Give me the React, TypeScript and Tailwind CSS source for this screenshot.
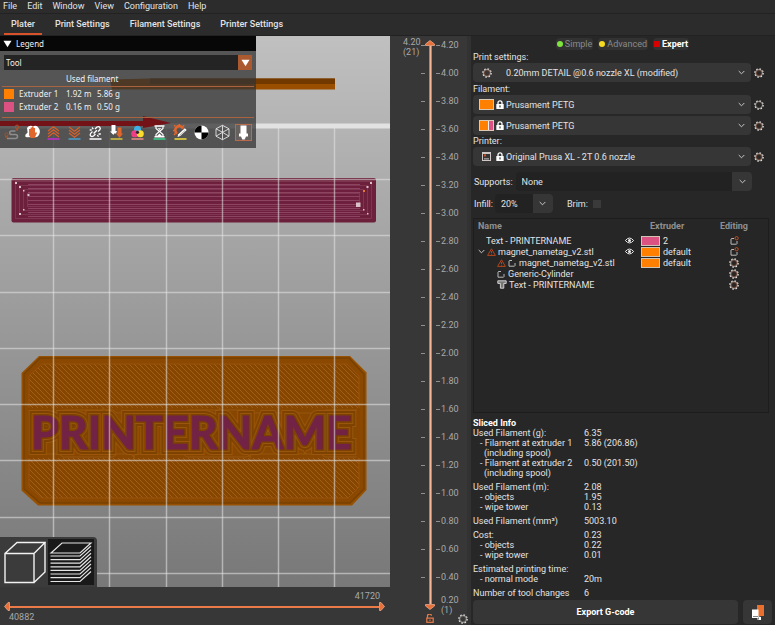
import type { ReactNode } from "react";
import clsx from "clsx";

const MENU = ["File", "Edit", "Window", "View", "Configuration", "Help"];
const TABS = ["Plater", "Print Settings", "Filament Settings", "Printer Settings"];

const TICKS = Array.from({ length: 20 }, (_, i) => (4.2 - i * 0.2).toFixed(2));

const GRID_X = [53, 109, 166, 222, 278, 334];
const GRID_Y = [179, 235, 292, 348, 404, 460, 517, 573];

const MODES = [
  { name: "Simple", dot: "bg-[#7fe53c] rounded-full", active: false },
  { name: "Advanced", dot: "bg-[#f5dc1e] rounded-full", active: false },
  { name: "Expert", dot: "bg-[#d90000]", active: true },
];

const SLICED = [
  [
    ["Used Filament (g):", "6.35", 0],
    ["- Filament at extruder 1", "5.86 (206.86)", 1],
    ["(including spool)", "", 2],
    ["- Filament at extruder 2", "0.50 (201.50)", 1],
    ["(including spool)", "", 2],
  ],
  [
    ["Used Filament (m):", "2.08", 0],
    ["- objects", "1.95", 1],
    ["- wipe tower", "0.13", 1],
  ],
  [["Used Filament (mm³)", "5003.10", 0]],
  [
    ["Cost:", "0.23", 0],
    ["- objects", "0.22", 1],
    ["- wipe tower", "0.01", 1],
  ],
  [
    ["Estimated printing time:", "", 0],
    ["- normal mode", "20m", 1],
  ],
  [["Number of tool changes", "6", 0]],
] as [string, string, number][][];

const INDENTS = ["", "pl-[7px]", "pl-[11px]"];

const Cog = ({ core = "#5a3526" }: { core?: string }) => (
  <svg width="10" height="10" viewBox="0 0 10 10" className="shrink-0">
    <circle cx="5" cy="5" r="2.6" fill="none" stroke={core} strokeWidth="1.2" />
    <circle cx="5" cy="5" r="3.5" fill="none" stroke="#b9b0ab" strokeWidth="0.8" />
    <circle
      cx="5"
      cy="5"
      r="4.2"
      fill="none"
      stroke="#e8e4e1"
      strokeWidth="1.2"
      strokeDasharray="1.5 1.8"
    />
  </svg>
);

const Chevron = () => (
  <svg width="7" height="5" viewBox="0 0 7 5" className="shrink-0">
    <path d="M.7 1 3.5 3.8 6.3 1" fill="none" stroke="#c8c8c8" />
  </svg>
);

const Lock = () => (
  <svg width="8" height="9" viewBox="0 0 8 9">
    <path d="M2 4.5V2.8a2 2 0 0 1 4 0v1.7" fill="none" stroke="#fff" strokeWidth="1.3" />
    <rect x=".3" y="4" width="7.4" height="5" rx=".6" fill="#fff" />
    <rect x="3.4" y="5.4" width="1.2" height="2" fill="#333" />
  </svg>
);

const Eye = () => (
  <svg width="9" height="7" viewBox="0 0 9 7">
    <path d="M.4 3.5Q4.5-1.4 8.6 3.5 4.5 8.4.4 3.5Z" fill="#222" stroke="#eee" strokeWidth="1" />
    <circle cx="4.5" cy="3.5" r="1.5" fill="#eee" />
  </svg>
);

const Warning = () => (
  <svg width="9" height="8" viewBox="0 0 9 8" className="shrink-0">
    <path d="M4.5.8 8.4 7.4H.6Z" fill="none" stroke="#b5451b" />
    <path d="M4.5 3v2.2M4.5 5.9v.8" stroke="#b5451b" strokeWidth=".9" />
  </svg>
);

const Part = ({ dot = false }: { dot?: boolean }) => (
  <svg width="9" height="9" viewBox="0 0 9 9" className="shrink-0">
    <path d="M4 2.5H1.500L1 3V8.200h5.5L7 7.700V5" fill="none" stroke="#c9c9c9" strokeWidth=".9" />
    {dot && <circle cx="6.6" cy="2.2" r="1.6" fill="none" stroke="#c4501f" />}
  </svg>
);

const TextPart = () => (
  <svg width="10" height="9" viewBox="0 0 10 9" className="shrink-0">
    <path d="M.8.8h8.4v2.6H6.8v4.8H3.4V3.4H.8Z" fill="#777" stroke="#ddd" strokeWidth=".9" />
  </svg>
);

const PrinterIcon = () => (
  <svg width="9" height="9" viewBox="0 0 9 9">
    <rect x=".5" y=".5" width="8" height="8" fill="none" stroke="#cfc8c4" />
    <path d="M.5 1.5h8M2 6.9h5" stroke="#cfc8c4" />
    <rect x="2" y="2.4" width="2" height="2" fill="#d4551f" />
  </svg>
);

const Swatch = ({ split = false }: { split?: boolean }) => (
  <span className="flex h-[11px] w-[15px] border border-[#d9c9b5] bg-[#ff8000]">
    {split && <span className="ml-auto w-[5px] border-l border-[#eee] bg-[#db5182]" />}
  </span>
);

const LegendIcon = ({ bar, children }: { bar?: string; children: ReactNode }) => (
  <svg width="17" height="17" viewBox="0 0 17 17">
    {children}
    {bar && <path d="M2.5 15h12" stroke={bar} strokeWidth="1.5" />}
  </svg>
);

const LegendIcons = () => (
  <div className="relative flex justify-between pr-1 pl-[3px]">
    <LegendIcon>
      <path
        d="M4 14.500h8.500a2 2 0 0 0 0-4H8.500a1.800 1.800 0 0 1 0-3.600h4"
        fill="none"
        stroke="#8d8d8d"
        strokeWidth="1.5"
      />
      <circle cx="3.500" cy="10.500" r="1.600" fill="none" stroke="#9b5434" />
      <circle cx="14" cy="2.800" r="1.700" fill="none" stroke="#b0532a" />
      <path d="m2.400 12 1.100 2.200L4.600 12M12.900 4.500l1.100 2.200 1.100-2.200" stroke="#b0532a" fill="none" />
    </LegendIcon>
    <LegendIcon>
      <path
        d="M3 4Q5 1 9 2.2 13 .8 14.6 4 17 7 15 11q-2 3-4.5 2L3 13.2Q.4 13 1.6 10.4L3.6 8.5Z"
        fill="#fff"
      />
      <path d="M5 8V5h1.600V3.400H8v-.8h1.600v1.400H11V9l1-1 1 .9-2.400 5.100H7L5 11.500Z" fill="#e0662d" />
    </LegendIcon>
    <LegendIcon bar="#c42bd0">
      <path
        d="m3 7 5.5-4.2L14 7M3 10l5.5-4.2L14 10M3 13l5.5-4.2L14 13"
        stroke="#d8602b"
        strokeWidth="1.2"
        fill="none"
      />
    </LegendIcon>
    <LegendIcon bar="#4d9fce">
      <path
        d="m3 3 5.5 4.2L14 3M3 6l5.5 4.2L14 6M3 9l5.5 4.2L14 9"
        stroke="#d8602b"
        strokeWidth="1.2"
        fill="none"
      />
    </LegendIcon>
    <LegendIcon bar="#fff">
      <path
        d="m8 5 2-2q1.700-1 2.800.2t0 2.600L11 7.600M8.500 10l-2 2q-1.600 1-2.800 0t0-2.600L5.500 7.500M6.600 9.500l3.300-3.300M5 3.500l1.300 1.700M2.700 6h2M11.500 10h2.300M10.300 11l1.200 1.700"
        stroke="#fff"
        strokeWidth="1.3"
        fill="none"
      />
    </LegendIcon>
    <LegendIcon bar="#d6c33f">
      <path d="M3.500 1h4v6H9l-1 2.500H6l-.5 1.500L2 7.500h1.500Z" fill="#fff" />
      <path d="M9.500 3.500h4v6H15L11.500 14 8 9.500h1.500Z" fill="#e0662d" />
    </LegendIcon>
    <LegendIcon bar="#ef8d86">
      <circle cx="8.500" cy="5.300" r="3.500" fill="#3fb1e6" />
      <circle cx="5.700" cy="9.800" r="3.500" fill="#ef3e88" />
      <circle cx="11.300" cy="9.800" r="3.500" fill="#fbdc2c" />
      <circle cx="8.500" cy="8.300" r="1.600" fill="#2b2430" />
    </LegendIcon>
    <LegendIcon bar="#39d48c">
      <path d="M3.500 2h10M3.500 12.800h10" stroke="#fff" strokeWidth="1.500" />
      <path
        d="M5 2.500v2L8.500 7.400 12 4.500v-2M5 12.500v-2l3.500-3.100 3.500 3.100v2"
        stroke="#fff"
        strokeWidth="1.200"
        fill="none"
      />
      <path d="M6.500 4.300h4l-2 1.700ZM6 12l2.500-2.500L11 12Z" fill="#fff" />
    </LegendIcon>
    <LegendIcon bar="#f2dd3a">
      <path
        d="M11 4.800A4 4 0 1 0 5 9.500"
        fill="none"
        stroke="#e0662d"
        strokeWidth="2.600"
      />
      <path
        d="M3.500 2.500 2.200 1.200M7.300 1V0M2.700 6.500H1M11 2.500l1.200-1.300M3.500 9.500 2 11"
        stroke="#e0662d"
        strokeWidth="1.600"
      />
      <path d="m5.500 13 .8-2.800 6.500-6 1.900 1.900-6.500 6Z" fill="#fff" />
      <path d="m7.500 11.500 5.500-5" stroke="#8d8d8d" strokeWidth=".7" />
    </LegendIcon>
    <LegendIcon>
      <circle cx="8.500" cy="8.500" r="7" fill="#fff" />
      <path d="M8.500 1.500a7 7 0 0 0-7 7h7ZM8.500 8.500h7a7 7 0 0 1-7 7Z" fill="#000" />
    </LegendIcon>
    <LegendIcon>
      <path
        d="M8.500 1.300 15 4.800v7.400l-6.500 3.500L2 12.200V4.800ZM2 4.800l6.500 3.500L15 4.800M8.500 8.300v7.400M2 12.200l6.500-3.900L15 12.200M8.500 1.300v7"
        fill="none"
        stroke="#e4e4e4"
        strokeWidth=".9"
      />
    </LegendIcon>
    <LegendIcon>
      <rect x=".5" y=".5" width="16" height="16" fill="#66605e" stroke="#b86a4c" />
      <path d="M5.500 1.500h6v8h1.500v3h-2l-1.300 3H7.300l-1.300-3H4v-3h1.500Z" fill="#fff" />
    </LegendIcon>
  </div>
);

const Scene = () => (
  <svg
    className="block h-full w-full"
    viewBox="0 36 390 551"
    preserveAspectRatio="xMinYMin slice"
  >
    <defs>
      <linearGradient id="sky" x1="0" y1="0" x2="0" y2="1">
        <stop offset="0" stopColor="#c0c0c0" />
        <stop offset=".35" stopColor="#a6a6a6" />
        <stop offset="1" stopColor="#787878" />
      </linearGradient>
      <pattern id="infill" width="5" height="5" patternUnits="userSpaceOnUse">
        <rect width="5" height="5" fill="#874600" />
        <path d="M-1-1 6 6M-1 4 1 6M4-1 6 1" stroke="#9f5f1a" strokeWidth="1" />
      </pattern>
      <pattern id="lines" width="4" height="4" y="179" patternUnits="userSpaceOnUse">
        <rect width="4" height="4" fill="#6e1f3d" />
        <rect width="4" height="1" y="1" fill="#8c4460" />
      </pattern>
    </defs>
    <rect y="36" width="390" height="551" fill="url(#sky)" />
    <path d="M110 79.500 150 78.500H335V89.500H112Z" fill="#9a4e00" />
    <path d="M150 78.500H335V84H150Z" fill="#713900" />

    <rect x="11.500" y="178" width="364.500" height="44.500" rx="2" fill="#6c203b" />
    <rect x="28" y="183" width="332" height="36" fill="url(#lines)" />
    {[0, 4, 8, 12].map((d) => (
      <rect
        key={d}
        x={15.5 + d}
        y={181.5 + d}
        width={356 - d * 2}
        height={37 - d * 2}
        fill="none"
        stroke="#874059"
        strokeWidth=".7"
      />
    ))}
    <g fill="#dcc0c8">
      <path d="M15 182h2v2h-2zM19 186h2v2h-2zM23 190h1.500v1.500H23zM27.500 194h2v2h-2zM19 213h2v2h-2zM23 209h1.500v1.500H23z" />
      <path d="M370 182h2v2h-2zM366.500 186h2v2h-2zM367 213h1.500v1.500H367zM363 209h1.500v1.500H363zM356 202.500h4.500v4.500H356z" />
    </g>
    <path d="M363 190h2v2h-2z" fill="#e07830" />

    <path d="M39 356H350L366.500 372.500V490L352 505.500H38L21.500 490.500V373Z" fill="#965000" />
    <path
      d="M40 358H349L364 374V489L350 503H40L24 489V374Z"
      fill="#8a4800"
      stroke="#774000"
      strokeWidth="1.500"
    />
    <path d="M42 364H347L359 376V487L348 498H42L29 487V376Z" fill="url(#infill)" stroke="#95530f" />
    <rect x="28" y="408" width="332" height="50" fill="#874700" />
    <path
      d="M31 413h28l4-3h50l4 3h66l4-3h60l4 3h70l4-3h32M31 454h28l4 3h50l4-3h66l4 3h60l4-3h70l4 3h32"
      fill="none"
      stroke="#96560f"
    />
    <g fontFamily="Lato, sans-serif" fontWeight="700" fontSize="45">
      <text x="31" y="449" fill="none" stroke="#9a560c" strokeWidth="12">
        PRINTERNAME
      </text>
      <text x="31" y="449" fill="none" stroke="#7e4200" strokeWidth="10">
        PRINTERNAME
      </text>
      <text x="31" y="449" fill="none" stroke="#9a560c" strokeWidth="6">
        PRINTERNAME
      </text>
      <text x="31" y="449" fill="none" stroke="#7e4200" strokeWidth="4">
        PRINTERNAME
      </text>
      <text x="31" y="449" fill="#722244" stroke="#722244" strokeWidth=".8">
        PRINTERNAME
      </text>
    </g>

    <g stroke="#e6e6e6" strokeOpacity=".55" strokeWidth="1.500">
      {GRID_X.map((x) => (
        <path key={x} d={`M${x + 0.5} 126V587`} />
      ))}
      {GRID_Y.map((y) => (
        <path key={y} d={`M0 ${y + 0.5}H390`} />
      ))}
    </g>
    <path d="M0 126H390" stroke="#e2e2e2" strokeWidth="5" />
  </svg>
);

const Legend = () => (
  <section className="absolute top-0 left-0 h-28 w-64 bg-[#333]/75 font-['Noto_Sans',sans-serif] text-[8px] leading-[13px] text-[#f0f0f0]">
    <h2 className="flex h-[15px] items-center gap-1 bg-[#070707] pl-[3px]">
      <svg width="9" height="8" viewBox="0 0 9 8">
        <path d="M.5.8h8l-4 6.400Z" fill="#fff" />
      </svg>
      Legend
    </h2>
    <svg className="absolute top-[80px] left-0" width="172" height="14" viewBox="0 0 172 14">
      <path d="M0 5H143V0L171 7 143 12V10H0Z" fill="#741317" />
    </svg>
    <div className="relative mx-1 mt-1 flex">
      <select
        aria-label="Legend view"
        className="h-[15px] w-full appearance-none bg-[#242424] px-[2px]"
      >
        <option>Tool</option>
      </select>
      <span className="pointer-events-none absolute top-0 right-0 flex h-[15px] w-[14px] items-center justify-center bg-[#ab5a2f]">
        <svg width="9" height="8" viewBox="0 0 9 8">
          <path d="M.5.8h8l-4 6.400Z" fill="#fff" />
        </svg>
      </span>
    </div>
    <table className="relative mx-[2px] mt-[2px] w-[252px] border-separate border-spacing-0 text-left">
      <thead>
        <tr>
          <th className="w-16 border-b border-[#a9633f]" />
          <th className="border-b border-[#a9633f] pb-px font-normal" colSpan={2}>
            Used filament
          </th>
        </tr>
      </thead>
      <tbody>
        {[
          ["Extruder 1", "1.92 m", "5.86 g", "bg-[#ff8000]"],
          ["Extruder 2", "0.16 m", "0.50 g", "bg-[#db5182]"],
        ].map(([name, length, weight, color]) => (
          <tr key={name}>
            <td className="flex w-16 items-center gap-[5px] pl-[2px]">
              <span className={clsx("h-[10px] w-[10px]", color)} />
              {name}
            </td>
            <td className="w-[31px]">{length}</td>
            <td>{weight}</td>
          </tr>
        ))}
      </tbody>
    </table>
    <div className="relative mx-[2px] mt-1 mb-[6px] h-px bg-[#a9633f]" />
    <LegendIcons />
  </section>
);

const ViewButtons = () => (
  <div className="absolute bottom-0 left-0 flex h-[50px] w-[97px] items-center gap-[2px] rounded-tr bg-[#3b3b3b]">
    <button aria-label="3D editor view" className="h-[46px] w-[46px]">
      <svg viewBox="0 0 46 46" fill="none" stroke="#f2f2f2" strokeWidth="1.400">
        <path d="M5 14.500H34V43.500H5ZM5 14.500 17 3.500H45L34 14.500M45 3.500V33L34 43.500" />
      </svg>
    </button>
    <button aria-label="Preview" className="h-[46px] w-[46px] bg-[#191919]">
      <svg viewBox="0 0 46 46" fill="none" stroke="#e4e4e4" strokeWidth="1.200">
        <path d="M3 14 14 4H43L32 14Z" />
        {[17, 20.6, 24.2, 27.8, 31.4, 35, 38.6, 42.5].map((y) => (
          <path key={y} d={`M2.500 ${y}H32L43 ${y - 10}`} />
        ))}
      </svg>
    </button>
  </div>
);

const MoveSlider = () => (
  <div className="relative flex h-[38px] flex-col bg-[#373737] px-1 text-[9px] leading-3 text-[#a9a9a9]">
    <span className="mt-[3px] mr-[6px] self-end">41720</span>
    <div className="relative flex h-[9px] items-center">
      <svg width="6" height="9" viewBox="0 0 6 9" className="shrink-0">
        <path d="M5.500.5v8H4L.5 4.500 4 .5Z" fill="#e8703a" stroke="#f3b394" strokeWidth=".7" />
      </svg>
      <span className="h-[2px] grow bg-[#ea7a48]" />
      <svg width="6" height="9" viewBox="0 0 6 9" className="mr-[1px] shrink-0">
        <path d="M.5.5v8H2L5.500 4.500 2 .5Z" fill="#e8703a" stroke="#f3b394" strokeWidth=".7" />
      </svg>
      <input
        type="range"
        aria-label="Moves"
        min={40882}
        max={41720}
        defaultValue={41720}
        className="absolute inset-0 w-full opacity-0"
      />
    </div>
    <span className="pl-[5px]">40882</span>
  </div>
);

const LayerSlider = () => (
  <aside className="relative w-[77px] shrink-0 bg-[#373737] pl-[13px] text-[9px] leading-[10px] text-[#a9a9a9]">
    <div className="flex">
      <div className="w-[18px] pt-[1px]">
        4.20
        <br />
        (21)
      </div>
      <ul className="flex-1">
        {TICKS.map((tick) => (
          <li key={tick} className="flex h-7 items-start pt-[4px]">
            <span className="mt-[5px] h-px w-1 bg-[#8f8f8f]" />
            <span className="mt-[5px] ml-[11px] h-px w-1 bg-[#8f8f8f]" />
            <span className="ml-[1px]">{tick}</span>
          </li>
        ))}
      </ul>
    </div>
    <div className="-mt-[1px] pl-[38px]">
      0.20
      <br />
      (1)
    </div>
    <div className="absolute top-[4px] left-[35px] flex h-[570px] w-[10px] flex-col items-center">
      <svg width="10" height="6" viewBox="0 0 10 6" className="shrink-0">
        <path d="M.5 5.500h9V4L5 .5.500 4Z" fill="#e8703a" stroke="#f3b394" strokeWidth=".7" />
      </svg>
      <span className="w-[3px] grow border-x border-[#e8703a] bg-[#f6b797]" />
      <svg width="10" height="6" viewBox="0 0 10 6" className="shrink-0">
        <path d="M.5.5h9V2L5 5.500.500 2Z" fill="#e8703a" stroke="#f3b394" strokeWidth=".7" />
      </svg>
      <input
        type="range"
        aria-label="Layers"
        min={1}
        max={21}
        defaultValue={21}
        className="absolute inset-0 h-full w-full opacity-0 [writing-mode:vertical-lr]"
      />
    </div>
    <button aria-label="Lock" className="absolute bottom-[2px] left-[36px]">
      <svg width="8" height="9" viewBox="0 0 8 9">
        <path d="M1.500 4V2.300a1.800 1.800 0 0 1 4-.5" fill="none" stroke="#ea7a48" strokeWidth="1.200" />
        <rect x=".8" y="4.100" width="6.400" height="4.200" fill="none" stroke="#ea7a48" strokeWidth="1.200" />
        <path d="M4 5.500v1.500" stroke="#ea7a48" />
      </svg>
    </button>
    <button aria-label="Slider settings" className="absolute right-[-1px] bottom-[1px]">
      <Cog core="#4a4a4a" />
    </button>
  </aside>
);

type PresetProps = { label: string; value: string; icons: ReactNode; core?: string };

const Preset = ({ label, value, icons, core }: PresetProps) => (
  <div className="flex items-center gap-[3px]">
    <div className="relative flex flex-1 items-center">
      <select
        aria-label={label}
        className="h-[19px] w-full appearance-none rounded-sm bg-[#363636] pl-[33px]"
      >
        <option>{value}</option>
      </select>
      <span className="pointer-events-none absolute left-[6px] flex w-[25px] items-center justify-between">
        {icons}
      </span>
      <span className="pointer-events-none absolute right-[6px] flex">
        <Chevron />
      </span>
    </div>
    <button aria-label={`Edit ${value}`}>
      <Cog core={core} />
    </button>
  </div>
);

type Row = {
  name: string;
  before: ReactNode;
  eye?: boolean;
  extruder?: string;
  color?: string;
  edit: ReactNode;
};

const ROWS: Row[] = [
  {
    name: "Text - PRINTERNAME",
    before: <span className="w-[6px]" />,
    eye: true,
    extruder: "2",
    color: "bg-[#db5182]",
    edit: <Part dot />,
  },
  {
    name: "magnet_nametag_v2.stl",
    before: (
      <>
        <Chevron />
        <Warning />
      </>
    ),
    eye: true,
    extruder: "default",
    color: "bg-[#ff8000]",
    edit: <Part dot />,
  },
  {
    name: "magnet_nametag_v2.stl",
    before: (
      <>
        <span className="w-[17px]" />
        <Warning />
        <Part />
      </>
    ),
    extruder: "default",
    color: "bg-[#ff8000]",
    edit: <Cog />,
  },
  {
    name: "Generic-Cylinder",
    before: (
      <>
        <span className="w-[17px]" />
        <Part />
      </>
    ),
    edit: <Cog />,
  },
  {
    name: "Text - PRINTERNAME",
    before: (
      <>
        <span className="w-[17px]" />
        <TextPart />
      </>
    ),
    edit: <Cog />,
  },
];

const ObjectList = () => (
  <div className="mr-[3px] h-[195px] border border-[#1d1d1d] bg-[#262626]">
    <table className="w-full table-fixed border-collapse">
      <thead>
        <tr className="h-4 text-left text-[#8f8f8f]">
          <th className="pt-0 pb-[2px] pl-1 font-bold">Name</th>
          <th className="w-[17px]" />
          <th className="w-[59px] pt-0 pb-[2px] pl-[9px] font-bold">Extruder</th>
          <th className="w-[68px] pt-0 pb-[2px] text-center font-bold">Editing</th>
        </tr>
      </thead>
      <tbody>
        {ROWS.map((row, i) => (
          <tr key={i}>
            <td className="p-0">
              <div className="flex h-[11px] items-center gap-[2px] pl-1 whitespace-nowrap">
                {row.before}
                {row.name}
              </div>
            </td>
            <td className="p-0 pl-px">{row.eye && <Eye />}</td>
            <td className="p-0">
              {row.extruder && (
                <div className="flex h-[11px] items-center gap-[3px]">
                  <span className={clsx("h-[10px] w-[19px] border border-[#cfc4b4]", row.color)} />
                  {row.extruder}
                </div>
              )}
            </td>
            <td className="p-0">
              <div className="flex h-[11px] items-center justify-center">{row.edit}</div>
            </td>
          </tr>
        ))}
      </tbody>
    </table>
  </div>
);

const SlicedInfo = () => (
  <section className="mt-[5px] leading-[10px]">
    <h2 className="font-bold text-white">Sliced Info</h2>
    <div className="flex flex-col gap-1">
      {SLICED.map((group) => (
        <dl key={group[0][0]} className="grid grid-cols-[111px_1fr]">
          {group.map(([label, value, level], i) => (
            <div key={i} className="contents">
              <dt className={clsx("h-[10px] whitespace-nowrap", INDENTS[level])}>{label}</dt>
              <dd>{value}</dd>
            </div>
          ))}
        </dl>
      ))}
    </div>
  </section>
);

const Sidebar = () => (
  <aside className="flex w-[308px] shrink-0 flex-col border-l-4 border-[#323232] bg-[#272727] pr-[3px] pl-[2px] leading-[12px]">
    <div className="mt-[2px] flex h-3 justify-center gap-[5px]">
      {MODES.map((mode) => (
        <button
          key={mode.name}
          className={clsx(
            "flex items-center gap-[2px] rounded-sm bg-[#323232] px-[1px]",
            mode.active ? "font-bold text-white" : "text-[#8a8a8a]",
          )}
        >
          <span className={clsx("h-[6px] w-[6px]", mode.dot)} />
          {mode.name}
        </button>
      ))}
    </div>

    <div className="mt-[1px] pr-[8px]">
      <p>Print settings:</p>
      <Preset
        label="Print settings"
        value="0.20mm DETAIL @0.6 nozzle XL (modified)"
        icons={
          <span className="ml-[3px]">
            <Cog />
          </span>
        }
      />
      <p className="mt-[1px]">Filament:</p>
      <div className="flex flex-col gap-[2px]">
        <Preset
          label="Filament 1"
          value="Prusament PETG"
          core="#272727"
          icons={
            <>
              <Swatch />
              <Lock />
            </>
          }
        />
        <Preset
          label="Filament 2"
          value="Prusament PETG"
          icons={
            <>
              <Swatch split />
              <Lock />
            </>
          }
        />
      </div>
      <p>Printer:</p>
      <Preset
        label="Printer"
        value="Original Prusa XL - 2T 0.6 nozzle"
        icons={
          <>
            <span className="ml-[3px]">
              <PrinterIcon />
            </span>
            <Lock />
          </>
        }
      />
    </div>

    <label className="mt-[6px] mr-5 flex h-[19px] items-center gap-[3px] pl-px">
      Supports:
      <span className="relative flex flex-1">
        <select className="h-[19px] w-full appearance-none rounded-sm bg-[#222] pl-[6px]">
          <option>None</option>
        </select>
        <span className="pointer-events-none absolute right-0 flex h-[19px] w-5 items-center justify-center rounded-r-sm bg-[#363636]">
          <Chevron />
        </span>
      </span>
    </label>

    <div className="mt-[3px] flex h-[19px] items-center pl-px">
      <label className="flex items-center gap-[2px]">
        Infill:
        <span className="relative flex">
          <select className="h-[19px] w-[58px] appearance-none rounded-sm bg-[#222] pl-[6px]">
            <option>20%</option>
          </select>
          <span className="pointer-events-none absolute right-0 flex h-[19px] w-5 items-center justify-center rounded-r-sm bg-[#363636]">
            <Chevron />
          </span>
        </span>
      </label>
      <label className="ml-[14px] flex items-center gap-[5px]">
        Brim:
        <input type="checkbox" className="h-2 w-2 appearance-none bg-[#3a3a3a]" />
      </label>
    </div>

    <div className="mt-[5px]">
      <ObjectList />
    </div>
    <SlicedInfo />

    <div className="mt-auto mb-[1px] flex gap-[5px]">
      <button className="h-6 flex-1 rounded-sm bg-[#363636] font-bold text-white">
        Export G-code
      </button>
      <button
        aria-label="Export to SD card"
        className="flex h-6 w-[29px] items-center justify-center rounded-sm bg-[#363636]"
      >
        <svg width="14" height="17" viewBox="0 0 14 17">
          <path d="M6 1h7v11H6Z" fill="#ea6f2c" />
          <path d="M1 5.500h6.500v7L10 13v3H6.500v-2H1Z" fill="#fff" />
          <path d="M2 12.500h5M7.500 13.500v2" stroke="#666" strokeWidth=".8" />
        </svg>
      </button>
    </div>
  </aside>
);

const App = () => (
  <div className="flex min-h-screen flex-col bg-[#2c2c2c] font-[Roboto,sans-serif] text-[9px] text-[#e3e3e3]">
    <nav className="flex h-[14px] items-center gap-[10px] border-b border-[#222] pb-[2px] pl-[3px] leading-3">
      {MENU.map((item) => (
        <button key={item}>{item}</button>
      ))}
    </nav>
    <div role="tablist" className="flex h-[22px] border-b border-[#222] pl-1 leading-3">
      {TABS.map((tab, i) => (
        <button
          key={tab}
          role="tab"
          aria-selected={i === 0}
          className={clsx(
            "mr-[6px] border-b-2 px-[7px] font-medium",
            i === 0 ? "border-[#d9532a]" : "border-transparent",
          )}
        >
          {tab}
        </button>
      ))}
    </div>

    <main className="flex flex-1">
      <div className="flex min-w-0 flex-1 flex-col">
        <div className="relative min-h-0 flex-1 overflow-hidden">
          <div className="h-full">
            <Scene />
          </div>
          <Legend />
          <ViewButtons />
        </div>
        <MoveSlider />
      </div>
      <LayerSlider />
      <Sidebar />
    </main>
  </div>
);

export default App;
